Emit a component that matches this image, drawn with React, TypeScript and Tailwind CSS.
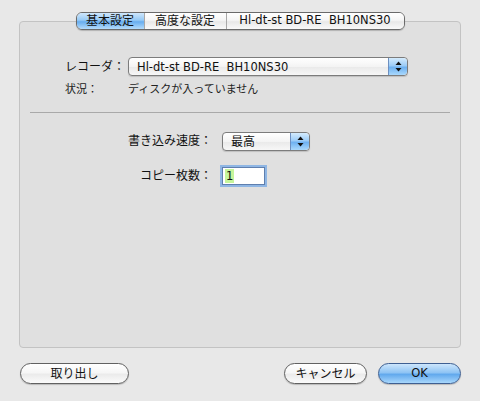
// Burn dialog (Mac OS X Aqua style): tabbed panel with recorder/speed/copies,
// and the eject / cancel / OK buttons underneath.

const FONT = "font-['Liberation_Sans','Noto_Sans_CJK_JP',sans-serif]";
// Lucida Grande is wider than Arial; DejaVu at 11px lands on the same widths
const LATIN = "font-['DejaVu_Sans','Noto_Sans_CJK_JP',sans-serif] text-[11.5px]";

function Stepper() {
  return (
    <div className="flex h-full w-[19px] items-center justify-center rounded-r-[4px] border-l border-[#6d8fc0] bg-[linear-gradient(to_bottom,#d4ebfd_0%,#9cccf7_45%,#6eb1f1_55%,#a9d8fc_100%)]">
      <svg width="7" height="11" viewBox="0 0 7 11">
        <path d="M3.5 0.5 L6.5 4 L0.5 4 Z" fill="#111" />
        <path d="M3.5 10.5 L6.5 7 L0.5 7 Z" fill="#111" />
      </svg>
    </div>
  );
}

function Popup({ label, width, latin }: { label: string; width: string; latin?: boolean }) {
  return (
    <div
      className={`flex h-[19px] ${width} items-stretch rounded-[4px] border border-[#7c7c7c] bg-[linear-gradient(to_bottom,#ffffff_0%,#f4f4f4_50%,#e9e9e9_51%,#f7f7f7_100%)] shadow-[0_1px_1px_rgba(0,0,0,0.15)]`}
    >
      <span className={`flex-1 whitespace-pre pl-[8px] leading-[18px] ${latin ? LATIN : "text-[12px]"}`}>{label}</span>
      <Stepper />
    </div>
  );
}

function Tab({ label, width, active, first, last, latin }: { label: string; width: string; active?: boolean; first?: boolean; last?: boolean; latin?: boolean }) {
  return (
    <div
      className={`flex h-full ${width} items-center justify-center whitespace-pre ${latin ? LATIN : "text-[12px]"} ${
        first ? "rounded-l-[5px]" : "border-l border-[#a8a8a8]"
      } ${last ? "rounded-r-[5px]" : ""} ${
        active
          ? "bg-[linear-gradient(to_bottom,#cfe7fc_0%,#95c9f5_45%,#67adef_55%,#b4dcfc_100%)]"
          : "bg-[linear-gradient(to_bottom,#ffffff_0%,#f5f5f5_45%,#e8e8e8_55%,#f9f9f9_100%)]"
      }`}
    >
      {label}
    </div>
  );
}

function PushButton({ label, width, primary }: { label: string; width: string; primary?: boolean }) {
  return (
    <button
      type="button"
      className={`flex h-[21px] ${width} items-center justify-center rounded-full border shadow-[0_1px_1px_rgba(0,0,0,0.2)] ${
        primary
          ? `border-[#3e5f92] bg-[linear-gradient(to_bottom,#cde6fc_0%,#8fc4f4_45%,#62a9ed_55%,#a8d7fc_100%)] ${LATIN}`
          : "border-[#616161] bg-[linear-gradient(to_bottom,#ffffff_0%,#f6f6f6_45%,#ebebeb_55%,#fbfbfb_100%)] text-[12px]"
      }`}
    >
      {label}
    </button>
  );
}

export default function App() {
  return (
    <div className={`h-[401px] w-[480px] bg-[#e8e8e8] px-[19px] pt-[21px] text-[#111] ${FONT}`}>
      <div className="flex h-[327px] w-[442px] flex-col rounded-[4px] border border-[#c3c3c3] bg-[#e0e0e0]">
        {/* tabs sit on the panel's top edge */}
        <div className="-mt-[10px] flex justify-center">
          <div className="flex h-[18px] rounded-[6px] border border-[#6a6a6a] shadow-[0_1px_1px_rgba(0,0,0,0.2)]">
            <Tab label="基本設定" width="w-[67px]" active first />
            <Tab label="高度な設定" width="w-[82px]" />
            <Tab label="Hl-dt-st BD-RE  BH10NS30" width="w-[178px]" last latin />
          </div>
        </div>

        <div className="mt-[27px] flex items-center pl-[45px]">
          <span className="w-[63px] text-[12px]">レコーダ：</span>
          <Popup label="Hl-dt-st BD-RE  BH10NS30" width="w-[280px]" latin />
        </div>

        <div className="mt-[5px] flex items-center pl-[45px] text-[11px] text-[#222]">
          <span className="w-[63px]">状況：</span>
          <span>ディスクが入っていません</span>
        </div>

        <div className="mx-[10px] mt-[14px] border-t border-[#a9a9a9]" />

        <div className="mt-[19px] flex items-center">
          <span className="w-[192px] text-right text-[12px]">書き込み速度：</span>
          <div className="ml-[10px]">
            <Popup label="最高" width="w-[88px]" />
          </div>
        </div>

        <div className="mt-[16px] flex items-center">
          <span className="w-[192px] text-right text-[12px]">コピー枚数：</span>
          <div className={`ml-[10px] flex h-[18px] w-[43px] items-center border border-[#5f7fae] bg-white pl-[2px] shadow-[0_0_0_2px_#8fb6e4] ${LATIN}`}>
            <span className="bg-[#c6f59b] px-[1px] leading-[14px]">1</span>
          </div>
        </div>
      </div>

      <div className="mt-[15px] flex items-center justify-between pl-[1px]">
        <PushButton label="取り出し" width="w-[109px]" />
        <div className="flex gap-[11px]">
          <PushButton label="キャンセル" width="w-[83px]" />
          <PushButton label="OK" width="w-[83px]" primary />
        </div>
      </div>
    </div>
  );
}
